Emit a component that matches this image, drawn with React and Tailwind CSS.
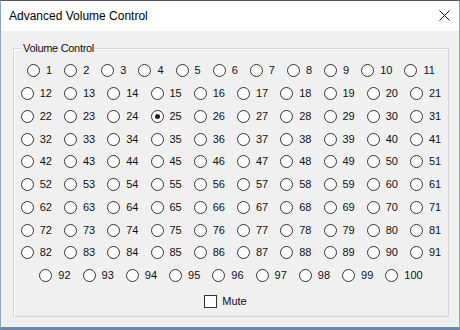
import React from "react";

const rows = [];
rows.push(Array.from({ length: 11 }, (_, i) => i + 1));
for (let r = 0; r < 8; r++) rows.push(Array.from({ length: 10 }, (_, i) => 12 + r * 10 + i));
rows.push(Array.from({ length: 9 }, (_, i) => 92 + i));

function Radio({ n, checked }) {
  return (
    <div className="flex items-center">
      <div className="w-[13px] h-[13px] rounded-full border border-[#333333] bg-white flex items-center justify-center shrink-0">
        {checked && <div className="w-[5px] h-[5px] rounded-full bg-[#222222]" />}
      </div>
      <span className="ml-[6px] text-[11px] leading-[13px] text-[#111111]">{n}</span>
    </div>
  );
}

export default function App() {
  return (
    <div
      className="w-[460px] h-[330px] flex flex-col bg-[#f0f0f0] border-t border-t-[#4d5a66] border-x border-x-[#8aa6c4] border-b-[3px] border-b-[#6a88a8] overflow-hidden"
      style={{ fontFamily: '"Liberation Sans", Arial, sans-serif' }}
    >
      <div className="h-[30px] bg-white flex items-center justify-between pl-[8px] pr-[9px] shrink-0">
        <span className="text-[12px] text-black">Advanced Volume Control</span>
        <svg width="11" height="11" viewBox="0 0 11 11" className="mb-[1px]">
          <path d="M0.5 0.5 L10.5 10.5 M10.5 0.5 L0.5 10.5" stroke="#111" strokeWidth="1" />
        </svg>
      </div>
      <div className="flex-1 pt-[17px] pl-[12px] pr-[10px]">
        <div className="relative border border-[#d6d6d6] shadow-[inset_1px_1px_0_#ffffff] pt-[10.5px] pb-[3px]">
          <span className="absolute top-[-8px] left-[8px] px-[1px] bg-[#f0f0f0] text-[11px] leading-[14px] tracking-[-0.3px] text-[#111111]">
            Volume Control
          </span>
          {rows.map((row, ri) => (
            <div key={ri} className="h-[22.75px] flex items-center justify-center gap-[12px]">
              {row.map((n) => (
                <Radio key={n} n={n} checked={n === 25} />
              ))}
            </div>
          ))}
          <div className="h-[22.75px] mt-[3px] flex items-center justify-center pr-[11px]">
            <div className="w-[13px] h-[13px] border border-[#333333] bg-white" />
            <span className="ml-[5px] text-[11px] leading-[13px] text-[#111111]">Mute</span>
          </div>
        </div>
      </div>
    </div>
  );
}
